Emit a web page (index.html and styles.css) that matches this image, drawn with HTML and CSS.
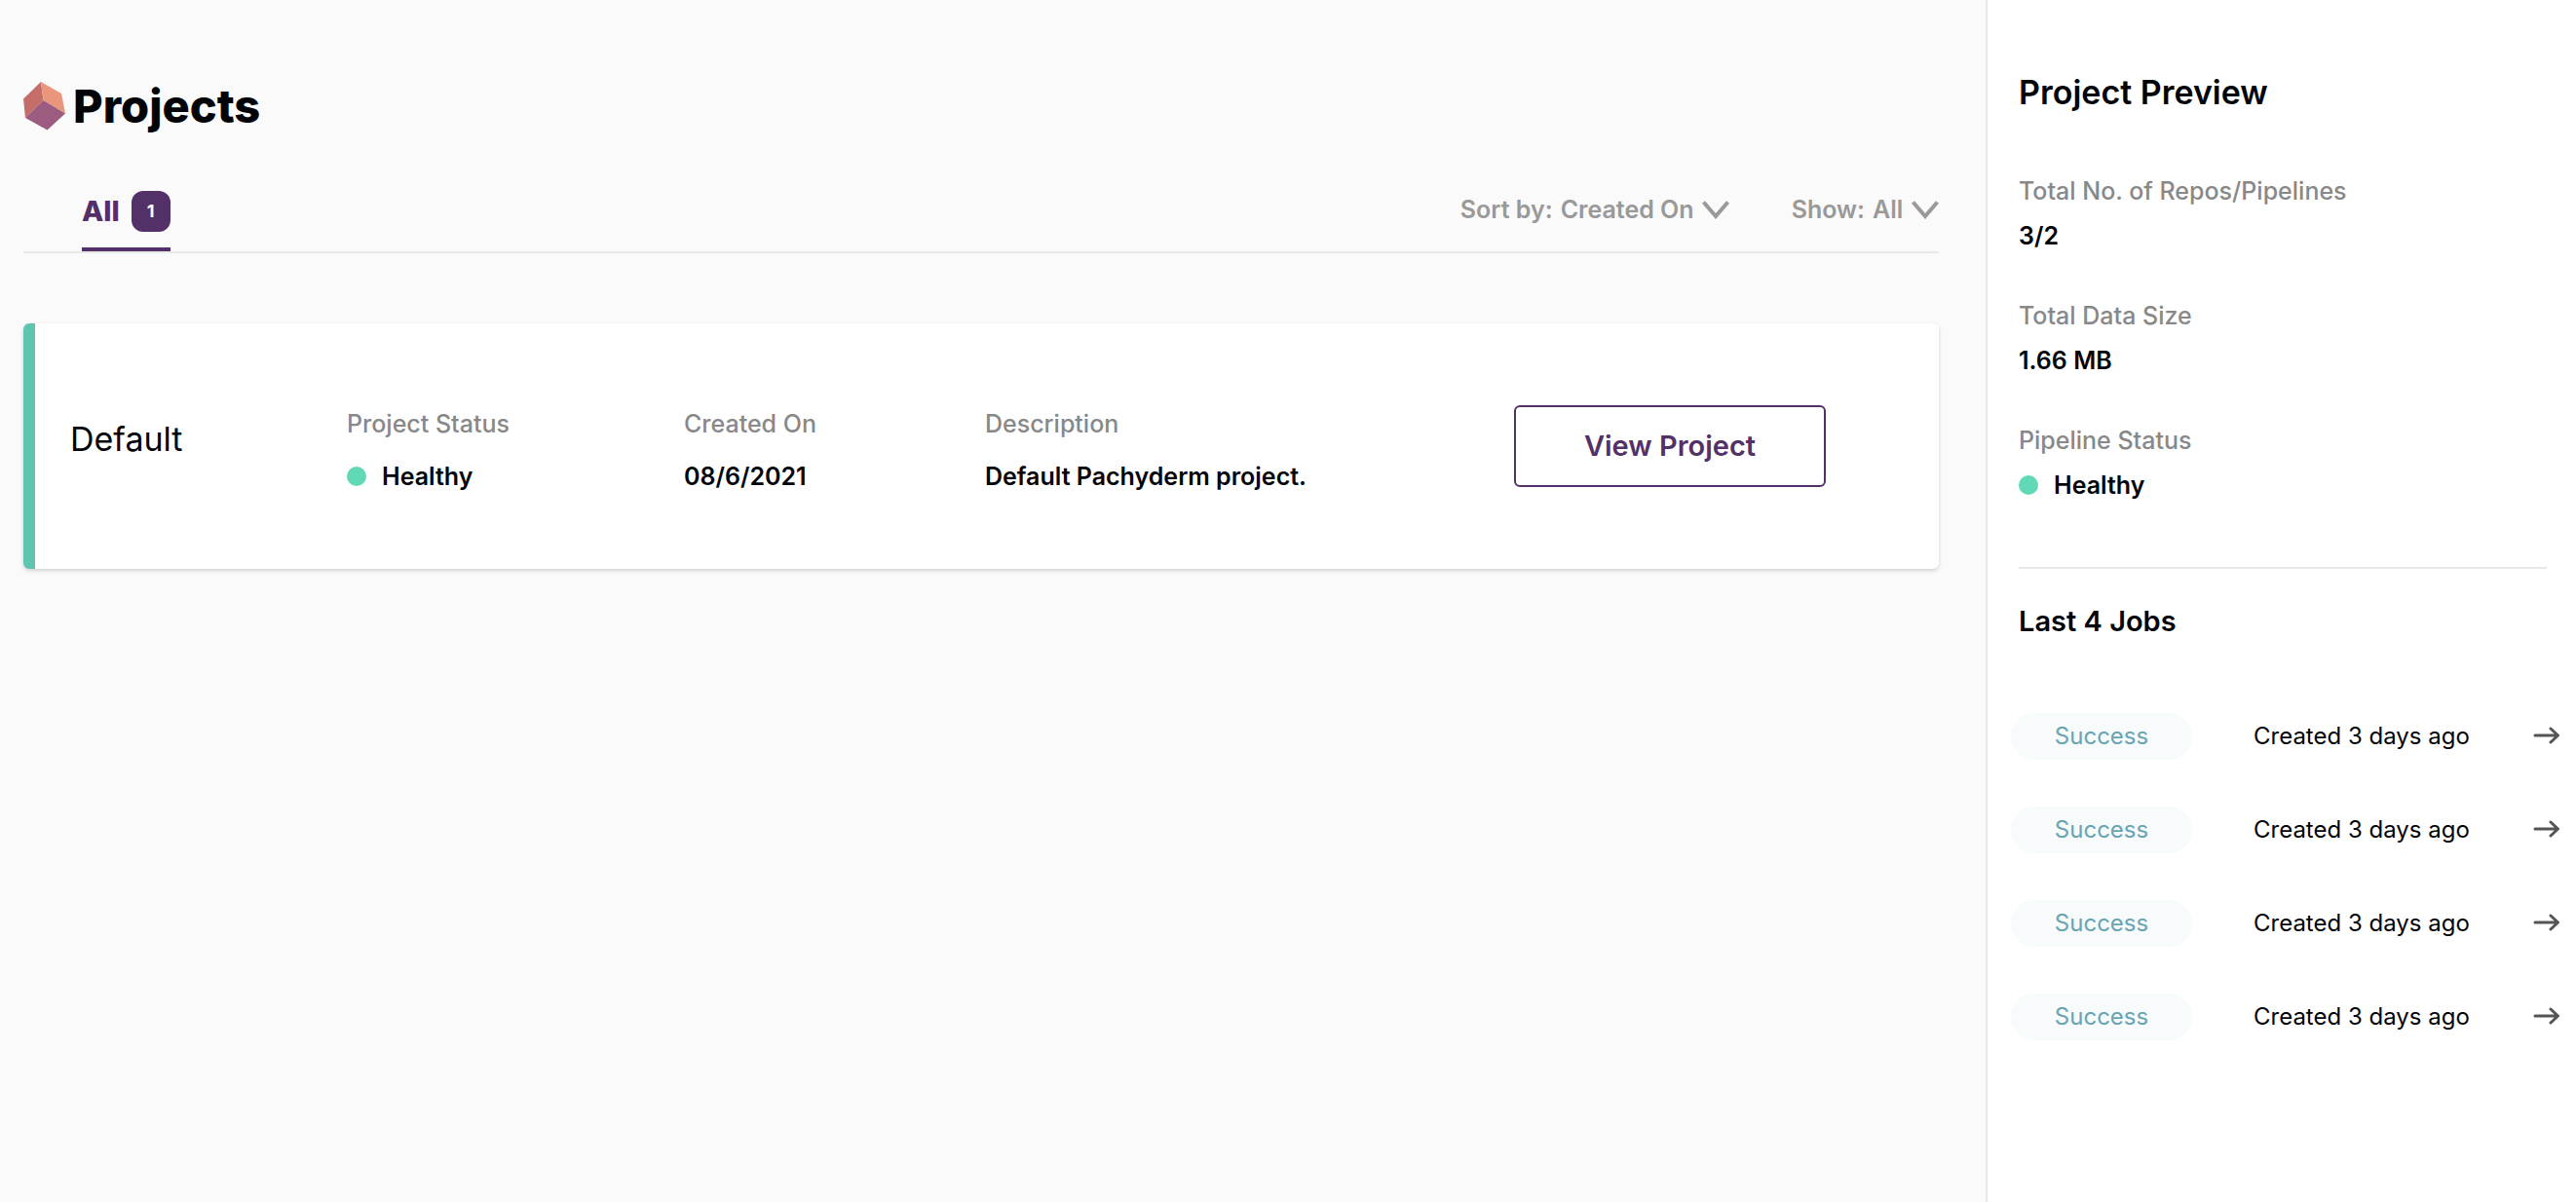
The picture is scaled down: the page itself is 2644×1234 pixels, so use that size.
FILE: index.html
```html
<!DOCTYPE html>
<html lang="en">
<head>
<meta charset="utf-8">
<meta name="viewport" content="width=device-width, initial-scale=1">
<title>Projects</title>
<link rel="stylesheet" href="styles.css">
</head>
<body>
<div class="layout">
  <main class="main">
    <header class="page-header">
      <svg class="logo" viewBox="0 0 43 50" aria-hidden="true">
        <path fill="#c56d68" d="M18 0 0 17.500 2 37 20.500 19z"/>
        <path fill="#e9967b" d="M18 0 39 12 43 32.500 20.500 19z"/>
        <path fill="#9b5c80" d="M20.500 19 43 32.500 24.500 49.500 2 37z"/>
      </svg>
      <h1 class="page-title">Projects</h1>
    </header>

    <div class="toolbar">
      <div role="tablist">
        <button class="tab" type="button" role="tab" aria-selected="true">All <span class="badge">1</span></button>
      </div>
      <div class="filters">
        <div class="filter">
          <label for="sort">Sort by:</label>
          <select id="sort" class="filter-select"><option>Created On</option></select>
          <svg class="chevron" viewBox="0 0 28 20" aria-hidden="true"><path d="M1.500 2.500 14 17 26.500 2.500"/></svg>
        </div>
        <div class="filter">
          <label for="show">Show:</label>
          <select id="show" class="filter-select"><option>All</option></select>
          <svg class="chevron" viewBox="0 0 28 20" aria-hidden="true"><path d="M1.500 2.500 14 17 26.500 2.500"/></svg>
        </div>
      </div>
    </div>

    <article class="card">
      <h2 class="card-name">Default</h2>
      <dl class="field">
        <dt>Project Status</dt>
        <dd class="status">Healthy</dd>
      </dl>
      <dl class="field">
        <dt>Created On</dt>
        <dd>08/6/2021</dd>
      </dl>
      <dl class="field">
        <dt>Description</dt>
        <dd>Default Pachyderm project.</dd>
      </dl>
      <button class="view-button" type="button">View Project</button>
    </article>
  </main>

  <aside class="sidebar">
    <h2 class="sidebar-title">Project Preview</h2>
    <div class="summary">
      <dl class="field">
        <dt>Total No. of Repos/Pipelines</dt>
        <dd>3/2</dd>
      </dl>
      <dl class="field">
        <dt>Total Data Size</dt>
        <dd>1.66 MB</dd>
      </dl>
      <dl class="field">
        <dt>Pipeline Status</dt>
        <dd class="status">Healthy</dd>
      </dl>
    </div>
    <h3 class="jobs-title">Last 4 Jobs</h3>
    <ul class="jobs">
      <li class="job">
        <span class="pill">Success</span><span>Created 3 days ago</span>
        <a class="job-link" href="#job-1" aria-label="Open job"><svg class="arrow" viewBox="0 0 28 20"><path d="M2 9H25M18 2l7.500 7-7.500 7"/></svg></a>
      </li>
      <li class="job">
        <span class="pill">Success</span><span>Created 3 days ago</span>
        <a class="job-link" href="#job-2" aria-label="Open job"><svg class="arrow" viewBox="0 0 28 20"><path d="M2 9H25M18 2l7.500 7-7.500 7"/></svg></a>
      </li>
      <li class="job">
        <span class="pill">Success</span><span>Created 3 days ago</span>
        <a class="job-link" href="#job-3" aria-label="Open job"><svg class="arrow" viewBox="0 0 28 20"><path d="M2 9H25M18 2l7.500 7-7.500 7"/></svg></a>
      </li>
      <li class="job">
        <span class="pill">Success</span><span>Created 3 days ago</span>
        <a class="job-link" href="#job-4" aria-label="Open job"><svg class="arrow" viewBox="0 0 28 20"><path d="M2 9H25M18 2l7.500 7-7.500 7"/></svg></a>
      </li>
    </ul>
  </aside>
</div>
</body>
</html>
```
FILE: styles.css
```css
*,
*::before {
  box-sizing: border-box;
}

body {
  margin: 0;
  background: #fafafa;
  color: #020408;
  font-family: Inter, "Liberation Sans", sans-serif;
  font-size: 24px;
  line-height: 34px;
}

h1, h2, h3, dl, dd, ul {
  margin: 0;
  padding: 0;
}

button, select {
  font: inherit;
  color: inherit;
}

.layout {
  display: grid;
  grid-template-columns: minmax(0, 1fr) 606px;
  min-height: 100vh;
}

.main {
  padding: 84px 48px 48px 24px;
}

.page-header {
  display: flex;
  align-items: center;
  gap: 8px;
}

.logo {
  width: 43px;
  height: 50px;
}

.page-title {
  font-size: 47px;
  font-weight: 800;
  line-height: 48px;
}

/* Tabs and filters */
.toolbar {
  display: flex;
  justify-content: space-between;
  align-items: flex-start;
  margin-top: 62px;
  padding-left: 60px;
  border-bottom: 2px solid #e8e8e8;
}

.tab {
  display: flex;
  align-items: center;
  gap: 12px;
  padding: 0 0 16px;
  border: 0;
  border-bottom: 4px solid #533068;
  background: none;
  color: #533068;
  font-size: 29px;
  font-weight: 800;
}

.badge {
  width: 40px;
  border-radius: 12px;
  background: #533068;
  color: #fff;
  font-size: 18px;
  font-weight: 700;
  line-height: 42px;
  text-align: center;
}

.filters {
  display: flex;
  gap: 64px;
  padding-top: 2px;
  color: #999;
  font-size: 25px;
  font-weight: 600;
}

.filter {
  display: flex;
  align-items: center;
  gap: 8px;
}

.filter-select {
  appearance: none;
  padding: 0;
  border: 0;
  background: none;
}

.chevron {
  width: 28px;
  height: 20px;
  fill: none;
  stroke: #999;
  stroke-width: 4;
}

/* Project card */
.card {
  display: grid;
  grid-template-columns: 284fr 346fr 309fr 543fr 320px;
  align-items: start;
  margin-top: 72px;
  padding: 84px 116px 78px 36px;
  border-left: 12px solid #5fc6ad;
  border-radius: 6px;
  background: #fff;
  box-shadow: 0 2px 4px rgba(0, 0, 0, 0.16);
}

.card-name {
  font-size: 34px;
  font-weight: 400;
  line-height: 70px;
}

.field {
  display: grid;
  gap: 12px;
  font-size: 25px;
}

.card .field {
  gap: 20px;
  padding-top: 2px;
}

.field dt {
  color: #888;
  font-weight: 500;
}

.field dd {
  font-weight: 600;
}

.status {
  display: flex;
  align-items: center;
  gap: 16px;
}

.status::before {
  content: "";
  width: 20px;
  height: 20px;
  border-radius: 50%;
  background: #62d9b6;
}

.view-button {
  height: 84px;
  border: 2px solid #533068;
  border-radius: 6px;
  background: #fff;
  color: #533068;
  font-size: 29px;
  font-weight: 600;
}

/* Preview panel */
.sidebar {
  padding: 75px 30px 48px 32px;
  border-left: 2px solid #e8e8e8;
  background: #fff;
}

.sidebar-title {
  font-size: 34px;
  font-weight: 600;
  line-height: 40px;
}

.summary {
  display: grid;
  gap: 48px;
  margin-top: 64px;
  padding-bottom: 67px;
  border-bottom: 2px solid #e8e8e8;
}

.jobs-title {
  margin-top: 36px;
  font-size: 29px;
  font-weight: 600;
  line-height: 36px;
}

.jobs {
  display: grid;
  gap: 48px;
  margin: 76px -14px 0 -8px;
  list-style: none;
}

.job {
  display: grid;
  grid-template-columns: 186px 1fr 28px;
  column-gap: 63px;
  align-items: center;
}

.pill {
  border-radius: 24px;
  background: #f7fbfc;
  color: #6ba3b3;
  line-height: 48px;
  text-align: center;
}

.job-link {
  display: flex;
}

.arrow {
  width: 28px;
  height: 20px;
  fill: none;
  stroke: #555;
  stroke-width: 3;
  stroke-linecap: round;
  stroke-linejoin: round;
}
```
